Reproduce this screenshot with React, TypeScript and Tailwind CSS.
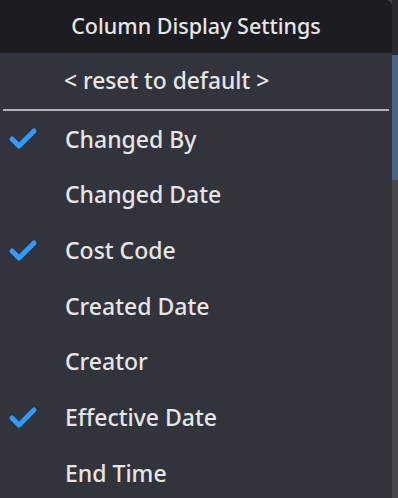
const COLUMNS = [
  { label: "Changed By", on: true },
  { label: "Changed Date", on: false },
  { label: "Cost Code", on: true },
  { label: "Created Date", on: false },
  { label: "Creator", on: false },
  { label: "Effective Date", on: true },
  { label: "End Time", on: false },
];

function Tick() {
  return (
    <svg width="30" height="23" viewBox="0 0 30 23" aria-hidden>
      <polyline
        points="4,12 11,19 26,4"
        fill="none"
        stroke="#2e9bff"
        strokeWidth="5"
        strokeLinecap="round"
        strokeLinejoin="round"
      />
    </svg>
  );
}

export default function App() {
  return (
    <div
      className="flex h-[498px] w-[398px] overflow-hidden bg-[#45464b]"
      style={{ fontFamily: '"Noto Sans", "Open Sans", sans-serif' }}
    >
      <div className="flex w-[392px] shrink-0 flex-col overflow-hidden rounded-tr-md bg-[#32333b]">
        <div className="flex h-[53px] shrink-0 items-center justify-center bg-[#1d1d21] text-[21.5px] font-medium text-[#e6e6e6]">
          Column Display Settings
        </div>
        <div className="flex h-[56px] shrink-0 items-center pl-[64px] text-[22.8px] font-medium text-[#e6e6e6]">
          &lt; reset to default &gt;
        </div>
        <div className="mx-[3px] h-[2px] shrink-0 bg-[#b4b4b6]" />
        <ul className="flex flex-col">
          {COLUMNS.map((c) => (
            <li key={c.label} className="flex h-[55.7px] items-center text-[23px] font-medium text-[#e6e6e6]">
              <span className="flex w-[65px] justify-start pl-[8px]">
                {c.on && <Tick />}
              </span>
              {c.label}
            </li>
          ))}
        </ul>
      </div>
      <div className="flex flex-1 flex-col">
        <div className="h-[55px] bg-[#2a2b30]" />
        <div className="h-[125px] bg-[#4a6484]" />
        <div className="flex-1 bg-[#46474c]" />
      </div>
    </div>
  );
}
